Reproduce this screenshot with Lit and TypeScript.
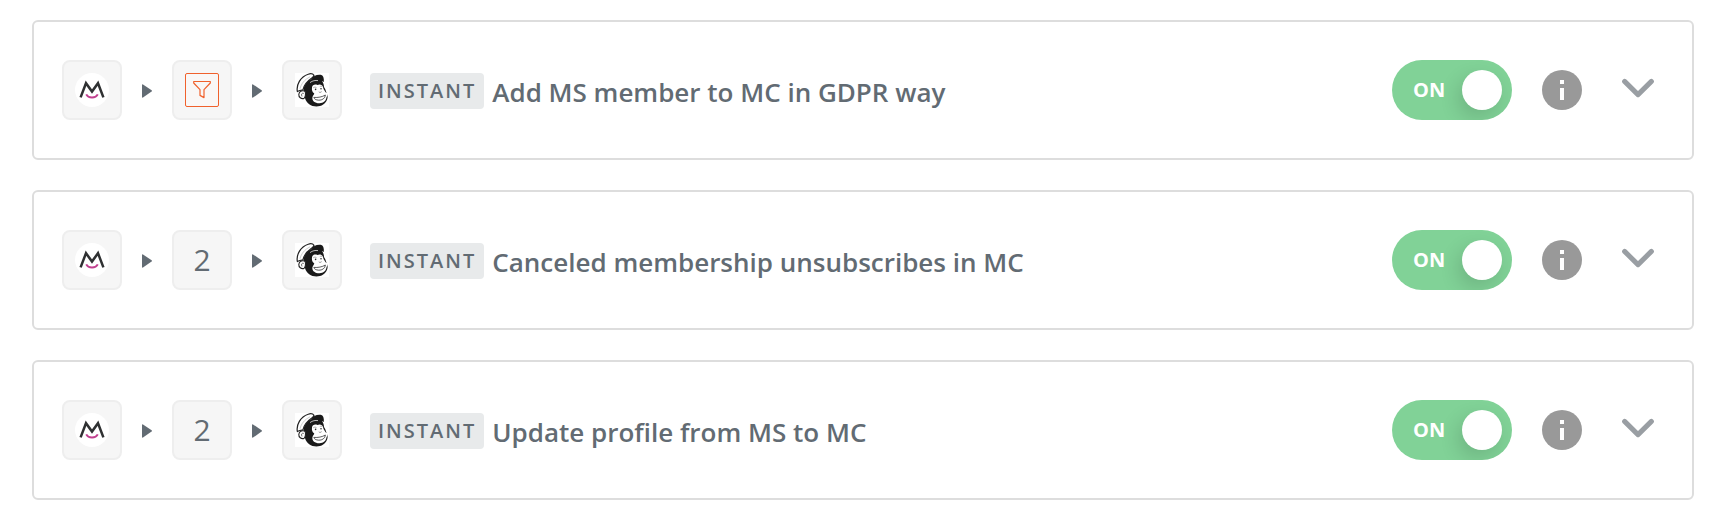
import { LitElement, html, svg, css } from "lit";
import { customElement, property } from "lit/decorators.js";

interface Zap {
  title: string;
  middle: "filter" | number;
}

const memberLogo = svg`<svg width="34" height="34" viewBox="0 0 34 34" role="img" aria-label="MemberSpace">
  <circle cx="17" cy="17" r="17" fill="#fff" />
  <path d="M5.6 24.4 L11 10.2 L17 18.6 L23 10.2 L28.4 24.4" fill="none" stroke="#2f3132" stroke-width="2.5" />
  <path d="M11.2 21.4 C13.4 25.6 20.6 25.6 22.8 21.4" fill="none" stroke="#c0408f" stroke-width="2" />
</svg>`;

const filterLogo = svg`<svg width="34" height="34" viewBox="0 0 34 34" role="img" aria-label="Filter">
  <rect x=".5" y=".5" width="33" height="33" rx="1.5" fill="#f9f7f6" stroke="#f0612c" />
  <path d="M8.7 8.5 H25.3 V10 L19 16.6 V24.6 L15 22.4 V16.6 L8.7 10 Z" fill="none" stroke="#f0612c" stroke-width="1.2" stroke-linejoin="round" />
</svg>`;

const chimpLogo = svg`<svg width="34" height="34" viewBox="0 0 34 34" role="img" aria-label="Mailchimp">
  <rect width="34" height="34" fill="#fff" />
  <path d="M8.6 16 C9.6 10 14 5.6 20 5.4 C26 5.2 29 9 29 14 C31 17 31 19 32 21 C34 25 31 31.4 25 33 C18.6 34.8 11.6 31.6 10 25 Z" fill="#191919" />
  <path d="M17 14.4 C17.4 11.8 20 11 22.4 12 C24.6 10.8 27.4 11.4 28.1 14.2 C28.3 16.4 29.8 17.8 30.8 19.4 C32.8 19.6 33 22.4 31.6 24 C31.2 28 28 30.4 24.2 30.2 C20 30.2 16.8 27.8 17.4 24.4 C17.8 22.4 19.4 21.4 19.2 20.2 C17.4 19.4 16.6 17 17 14.4 Z" fill="#fff" />
  <path d="M2.4 18.6 C1 12 5.4 3.8 13.2 1.2 C15.8 .3 18 .8 19 2.4 C18.6 4 17.4 4.6 16.2 5.6 C11.6 8.6 9 12 7.8 17.2 C6 17 4 17.6 2.4 18.6 Z" fill="#fff" stroke="#222" stroke-width="1.2" stroke-linejoin="round" />
  <path d="M5 15.8 C6 11 9.6 6.6 15 3.8" fill="none" stroke="#aaa" stroke-width=".6" />
  <path d="M16.4 6.4 C17.6 3 21.4 1.4 25.8 1.8 C28.2 2.4 29.2 5 28.8 9 C25.4 7.4 21.4 7 17.2 8.4 Z" fill="#191919" />
  <path d="M15 9.6 C17.6 7.6 20.4 7.2 23 7.6" fill="none" stroke="#ddd" stroke-width=".8" />
  <path d="M10.2 18.6 C8.4 17 4.2 17.8 3.8 21.2 C3.6 24.4 6.2 26.2 9 25.4 C10.2 24.6 11 21 10.2 18.6 Z" fill="#fff" stroke="#222" stroke-width="1.1" />
  <path d="M8.8 20.4 C7 19.6 5.8 21.4 7 23.4" fill="none" stroke="#444" stroke-width=".8" />
  <path d="M18.2 14.8 C19.4 13.8 20.8 14 21.6 14.8 M24.8 13.6 C25.8 12.8 26.8 13.2 27.4 14" fill="none" stroke="#777" stroke-width=".6" />
  <circle cx="20.6" cy="16.4" r=".8" fill="#333" />
  <circle cx="26" cy="15.8" r=".8" fill="#333" />
  <path d="M23.8 18.8 C24.6 19.8 26 19.4 26.6 18.6" fill="none" stroke="#666" stroke-width=".7" />
  <path d="M18.8 24.4 C22.8 24.8 27.2 24 30.4 22 C30.2 25.4 27 27.4 23.8 27.2 C20.8 27 19.2 26 18.8 24.4 Z" fill="#fff" stroke="#333" stroke-width=".8" stroke-linejoin="round" />
</svg>`;

const arrow = svg`<svg width="10" height="16" viewBox="0 -2 10 16" aria-hidden="true">
  <path d="M0 1 Q0 0 1 0.4 L9.6 6.3 Q10.3 7 9.6 7.6 L1 13.6 Q0 14 0 13 Z" fill="#626b73" />
</svg>`;

@customElement("zap-row")
export class ZapRow extends LitElement {
  @property({ attribute: false }) zap!: Zap;

  static styles = css`
    :host {
      display: flex;
      align-items: center;
      box-sizing: border-box;
      padding: 38px 38px 38px 28px;
      border: 2px solid #ddd;
      border-radius: 6px;
      background: #fff;
    }
    .steps {
      display: flex;
      align-items: center;
      gap: 20px;
      flex: none;
    }
    .steps svg {
      display: block;
    }
    .step {
      display: grid;
      place-items: center;
      box-sizing: border-box;
      width: 60px;
      height: 60px;
      border: 2px solid #eee;
      border-radius: 8px;
      background: #f6f6f6;
      font-size: 30px;
      line-height: 42px;
    }
    .name {
      display: flex;
      align-items: center;
      gap: 8px;
      flex: 1;
      min-width: 0;
      margin-left: 28px;
      padding-top: 2px;
    }
    .badge {
      padding: 0 8px;
      border-radius: 4px;
      background: #e8eaeb;
      font-size: 20px;
      line-height: 36px;
      font-weight: 600;
      letter-spacing: 2px;
    }
    .title {
      margin: 0;
      padding-top: 2px;
      font-size: 26px;
      line-height: 36px;
      font-weight: 600;
    }
    .actions {
      display: flex;
      align-items: center;
      flex: none;
    }
    .toggle {
      display: flex;
      align-items: center;
      justify-content: space-between;
      box-sizing: border-box;
      width: 120px;
      height: 60px;
      padding: 0 10px 0 21px;
      border-radius: 30px;
      background: #81d297;
      color: #fff;
      font-size: 20px;
      line-height: 26px;
      font-weight: 700;
      cursor: pointer;
      overflow: hidden;
    }
    .knob {
      appearance: none;
      width: 40px;
      height: 40px;
      margin: 0;
      border-radius: 50%;
      background: #fff;
      box-shadow: -4px 8px 20px rgba(0, 0, 0, 0.14);
      cursor: pointer;
    }
    .icon-button {
      display: block;
      margin: 0;
      padding: 0;
      border: 0;
      background: none;
      cursor: pointer;
    }
    .icon-button svg {
      display: block;
    }
    .info {
      margin-left: 30px;
    }
    .expand {
      margin-left: 40px;
    }
  `;

  render() {
    const { title, middle } = this.zap;
    return html`
      <div class="steps">
        <div class="step">${memberLogo}</div>
        ${arrow}
        <div class="step">${middle === "filter" ? filterLogo : middle}</div>
        ${arrow}
        <div class="step">${chimpLogo}</div>
      </div>
      <div class="name">
        <span class="badge">INSTANT</span>
        <h2 class="title">${title}</h2>
      </div>
      <div class="actions">
        <label class="toggle">ON<input class="knob" type="checkbox" role="switch" checked /></label>
        <button class="icon-button info" type="button" aria-label="Details">
          <svg width="40" height="40" viewBox="0 0 40 40" aria-hidden="true">
            <circle cx="20" cy="20" r="20" fill="#999" />
            <path d="M18 10h4v4h-4zM18 18h4v12h-4z" fill="#fff" />
          </svg>
        </button>
        <button class="icon-button expand" type="button" aria-label="Expand">
          <svg width="32" height="40" viewBox="0 0 32 40" aria-hidden="true">
            <path d="M2.6 11.4 L16 24.6 L29.4 11.4" fill="none" stroke="#999ea3" stroke-width="5" stroke-linecap="round" stroke-linejoin="round" />
          </svg>
        </button>
      </div>
    `;
  }
}

@customElement("app-root")
export class AppRoot extends LitElement {
  static styles = css`
    :host {
      display: block;
      padding: 20px 40px 20px 32px;
      background: #fff;
      color: #626b73;
      font-family: "Open Sans", "Noto Sans", sans-serif;
    }
    .list {
      display: grid;
      gap: 30px;
    }
  `;

  private zaps: Zap[] = [
    { title: "Add MS member to MC in GDPR way", middle: "filter" },
    { title: "Canceled membership unsubscribes in MC", middle: 2 },
    { title: "Update profile from MS to MC", middle: 2 },
  ];

  render() {
    return html`<main class="list">${this.zaps.map((zap) => html`<zap-row .zap=${zap}></zap-row>`)}</main>`;
  }
}
